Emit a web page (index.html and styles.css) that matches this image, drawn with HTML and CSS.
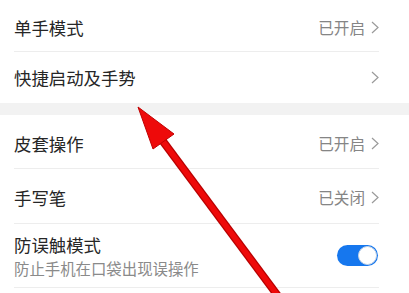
FILE: index.html
```html
<!DOCTYPE html>
<html lang="zh">
<head>
<meta charset="utf-8">
<link rel="stylesheet" href="styles.css">
</head>
<body>
<div class="page">
  <div class="group">
    <div class="row first">
      <span class="title">单手模式</span>
      <span class="value">已开启<svg class="chev" width="8" height="13" viewBox="0 0 8 13"><polyline points="1,1 7,6.5 1,12" fill="none" stroke="#9a9a9a" stroke-width="1.2"/></svg></span>
    </div>
    <div class="row last r2">
      <span class="title">快捷启动及手势</span>
      <span class="value"><svg class="chev" width="8" height="13" viewBox="0 0 8 13"><polyline points="1,1 7,6.5 1,12" fill="none" stroke="#9a9a9a" stroke-width="1.2"/></svg></span>
    </div>
  </div>
  <div class="band"></div>
  <div class="group">
    <div class="row r3">
      <span class="title">皮套操作</span>
      <span class="value">已开启<svg class="chev" width="8" height="13" viewBox="0 0 8 13"><polyline points="1,1 7,6.5 1,12" fill="none" stroke="#9a9a9a" stroke-width="1.2"/></svg></span>
    </div>
    <div class="row r4">
      <span class="title">手写笔</span>
      <span class="value">已关闭<svg class="chev" width="8" height="13" viewBox="0 0 8 13"><polyline points="1,1 7,6.5 1,12" fill="none" stroke="#9a9a9a" stroke-width="1.2"/></svg></span>
    </div>
    <div class="row r5">
      <div class="texts">
        <span class="title">防误触模式</span>
        <span class="sub">防止手机在口袋出现误操作</span>
      </div>
      <span class="toggle"><span class="knob"></span></span>
    </div>
  </div>
  <svg class="arrow" width="409" height="293" viewBox="0 0 409 293">
    <line x1="162" y1="140" x2="278" y2="296" stroke="#b80000" stroke-width="8" stroke-linecap="butt"/>
    <line x1="162" y1="140" x2="278" y2="296" stroke="#ee0a0a" stroke-width="5.5" stroke-linecap="butt"/>
    <polygon points="138,107 174,134 153,149" fill="#ee0a0a" stroke="#c00000" stroke-width="1" stroke-linejoin="round"/>
  </svg>
</div>
</body>
</html>
```
FILE: styles.css
```css
html, body {
  margin: 0;
  padding: 0;
  background: #ffffff;
}
body {
  font-family: "Noto Sans CJK SC", "Noto Sans", sans-serif;
  width: 409px;
  height: 293px;
  overflow: hidden;
}
.page {
  position: relative;
  width: 409px;
  height: 293px;
}
.group {
  padding-left: 14px;
  padding-right: 30px;
}
.row {
  box-sizing: border-box;
  display: flex;
  align-items: center;
  justify-content: space-between;
  border-bottom: 1px solid #ededed;
}
.row.first {
  height: 52px;
  padding-top: 3px;
}
.row.r2 {
  height: 51px;
  border-bottom: none;
}
.row.r3 {
  height: 54px;
  padding-top: 3px;
}
.row.r4 {
  height: 55px;
  padding-top: 2px;
}
.row.r5 {
  height: 64px;
}
.title {
  font-size: 17.4px;
  color: #262626;
  line-height: 21px;
}
.value {
  display: flex;
  align-items: center;
  font-size: 15.6px;
  color: #858585;
}
.chev {
  margin-left: 6px;
}
.band {
  height: 12px;
  background: #f2f2f2;
}
.texts {
  display: flex;
  flex-direction: column;
  gap: 3px;
}
.sub {
  font-size: 15.4px;
  color: #8a8a8a;
  line-height: 20px;
}
.toggle {
  box-sizing: border-box;
  width: 41px;
  height: 21px;
  border-radius: 11px;
  background: #1677ee;
  display: flex;
  justify-content: flex-end;
  align-items: center;
  padding-right: 1px;
  margin-right: 1px;
}
.knob {
  box-sizing: border-box;
  width: 19px;
  height: 19px;
  border-radius: 50%;
  background: #ffffff;
  border: 1px solid #c9d6e6;
}
.arrow {
  position: absolute;
  left: 0;
  top: 0;
}
```
